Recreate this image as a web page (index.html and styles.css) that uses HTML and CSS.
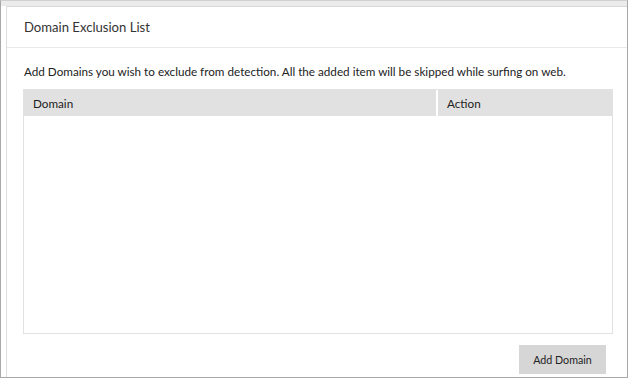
FILE: index.html
```html
<!DOCTYPE html>
<html lang="en">
<head>
    <meta charset="UTF-8">
    <meta name="viewport" content="width=device-width, initial-scale=1.0">
    <title>Domain Exclusion List</title>
    <link rel="stylesheet" href="styles.css">
</head>
<body>

<div class="frame">
    <div class="panel">
        <div class="panel-header">Domain Exclusion List</div>
        <div class="panel-body">
            <p class="intro">Add Domains you wish to exclude from detection. All the added item will be skipped while surfing on web.</p>

            <div class="table-wrap">
                <table id="domainTable">
                    <thead>
                        <tr>
                            <th>Domain</th>
                            <th class="col-action">Action</th>
                        </tr>
                    </thead>
                    <tbody>
                    </tbody>
                </table>
            </div>

            <div class="actions">
                <button type="button" class="btn">Add Domain</button>
            </div>
        </div>
    </div>
</div>

</body>
</html>
```

FILE: styles.css
```css
html, body {
    margin: 0;
    background: #fff;
}

body {
    font-family: Lato, "Open Sans", sans-serif;
    color: #222;
}

/* outer window edge */
.frame {
    width: 621px;
    height: 371px;
    border: 1px solid #a8a8a8;
    border-top-color: #d0d0d0;
    padding: 5px 0 0 5px;
    background: #fff;
    background-image: linear-gradient(#ebebeb, #ebebeb);
    background-repeat: no-repeat;
    background-size: 100% 5px;
}

.panel {
    height: 100%;
    border-left: 1px solid #dcdcdc;
    border-top: 1px solid #d8d8d8;
    background: #fff;
    box-sizing: border-box;
}

.panel-header {
    height: 40px;
    line-height: 41px;
    padding-left: 17px;
    font-size: 13.1px;
    color: #333;
    border-bottom: 1px solid #e8e8e8;
}

.panel-body {
    padding: 0 14px 0 16px;
}

.intro {
    margin: 0;
    padding: 14px 0 0 1px;
    height: 27px;
    font-size: 11.7px;
    line-height: 18px;
    white-space: nowrap;
}

.table-wrap {
    height: 243px;
    border: 1px solid #e2e2e2;
}

table {
    width: 100%;
    border-collapse: separate;
    border-spacing: 0;
}

th {
    height: 26px;
    padding: 0 9px;
    background: #e1e1e1;
    font-weight: normal;
    font-size: 11.7px;
    text-align: left;
    color: #222;
}

th.col-action {
    width: 156px;
    border-left: 2px solid #fff;
}

.actions {
    display: flex;
    justify-content: flex-end;
    padding: 11px 7px 0 0;
}

.btn {
    width: 87px;
    height: 29px;
    border: none;
    background: #d6d6d6;
    font-family: inherit;
    font-size: 10.7px;
    color: #222;
    cursor: pointer;
}

.btn:hover {
    background: #cacaca;
}
```
